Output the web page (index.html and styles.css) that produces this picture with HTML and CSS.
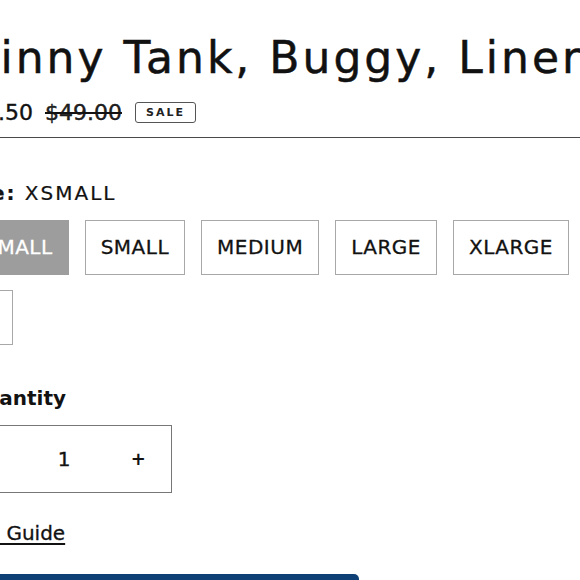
FILE: index.html
```html
<!DOCTYPE html>
<html lang="en">
<head>
<meta charset="utf-8">
<title>Skinny Tank, Buggy, Liner</title>
<link rel="stylesheet" href="styles.css">
</head>
<body>
<main class="product">
  <h1 class="title">Skinny Tank, Buggy, Liner</h1>
  <div class="price-row">
    <span class="price">$24.50</span>
    <s class="compare">$49.00</s>
    <span class="badge">Sale</span>
  </div>
  <hr class="rule">
  <div class="variant">
    <div class="variant-label"><b>Size:</b> XSMALL</div>
    <div class="options">
      <button class="opt opt-active">XSMALL</button>
      <button class="opt">SMALL</button>
      <button class="opt">MEDIUM</button>
      <button class="opt">LARGE</button>
      <button class="opt">XLARGE</button>
      <button class="opt">XXLARGE</button>
      <button class="opt">3X</button>
    </div>
  </div>
  <div class="qty">
    <div class="qty-label">Quantity</div>
    <div class="qty-box">
      <button class="qty-btn">&minus;</button>
      <span class="qty-val">1</span>
      <button class="qty-btn qty-plus">+</button>
    </div>
  </div>
  <a class="guide" href="#">Size Guide</a>
  <button class="add">Add to cart</button>
</main>
</body>
</html>
```

FILE: styles.css
```css
html, body {
  margin: 0;
  padding: 0;
  overflow: hidden;
  background: #fff;
}

body {
  font-family: "DejaVu Sans", "Liberation Sans", sans-serif;
  color: #121212;
}

.product {
  width: 770px;
  margin-left: -44px;
  padding-top: 32px;
  display: flex;
  flex-direction: column;
  align-items: flex-start;
}

.title {
  margin: 0 0 0 -15px;
  font-size: 44px;
  font-weight: 400;
  line-height: 52.8px;
  letter-spacing: 3px;
  white-space: nowrap;
  color: #111;
  -webkit-text-stroke: 0.5px #111;
}

.price-row {
  margin-top: 14px;
  display: flex;
  align-items: center;
  gap: 12px;
  font-size: 22px;
  line-height: 28px;
  -webkit-text-stroke: 0.4px #121212;
}

.price {
  color: #121212;
}

.compare {
  color: #222;
  text-decoration-thickness: 2px;
}

.badge {
  margin-left: 1px;
  border: 1px solid #555;
  border-radius: 3px;
  padding: 3px 10px;
  font-size: 11px;
  line-height: 13px;
  font-weight: 700;
  letter-spacing: 2px;
  text-transform: uppercase;
  color: #222;
  -webkit-text-stroke: 0;
}

.rule {
  align-self: stretch;
  margin: 10px 0 0;
  border: 0;
  border-top: 1px solid #4a4a4a;
  height: 0;
}

.variant {
  margin-top: 43px;
  align-self: stretch;
}

.variant-label {
  margin-left: -4px;
  font-size: 20px;
  line-height: 24px;
  letter-spacing: 2px;
  -webkit-text-stroke: 0.2px #121212;
}

.options {
  margin-top: 15px;
  display: flex;
  flex-wrap: wrap;
  gap: 15px 16px;
  margin-left: -2px;
}

.opt {
  font-family: inherit;
  font-size: 20px;
  line-height: 23px;
  letter-spacing: 0.5px;
  padding: 15px 15px;
  background: #fff;
  color: #121212;
  border: 1px solid #a8a8a8;
  border-radius: 0;
  -webkit-text-stroke: 0.3px #121212;
}

.opt-active {
  background: #9d9d9d;
  border-color: #9d9d9d;
  color: #fff;
  -webkit-text-stroke: 0.3px #fff;
}

.qty {
  margin-top: 41px;
}

.qty-label {
  font-size: 20px;
  line-height: 24px;
  font-weight: 700;
  margin-left: 12px;
}

.qty-box {
  margin-top: 15px;
  width: 214px;
  height: 66px;
  border: 1px solid #777;
  display: flex;
  align-items: center;
}

.qty-btn,
.qty-val {
  flex: 1 1 0;
  text-align: center;
}

.qty-btn {
  height: 100%;
  background: none;
  border: 0;
  padding: 0;
  font-family: inherit;
  font-size: 18px;
  font-weight: 700;
  color: #121212;
}

.qty-plus {
  text-indent: 6px;
}

.qty-val {
  font-size: 20px;
  font-weight: 500;
  -webkit-text-stroke: 0.4px #121212;
}

.guide {
  margin-top: 28px;
  margin-left: 3px;
  font-size: 20px;
  line-height: 24px;
  color: #121212;
  text-decoration: underline;
  text-underline-offset: 3px;
  text-decoration-thickness: 1.5px;
  -webkit-text-stroke: 0.3px #121212;
}

.add {
  margin-top: 29px;
  width: 403px;
  height: 56px;
  background: #0e3f75;
  color: #fff;
  border: 0;
  border-radius: 5px;
  font-family: inherit;
  font-size: 18px;
  letter-spacing: 1px;
}
```
